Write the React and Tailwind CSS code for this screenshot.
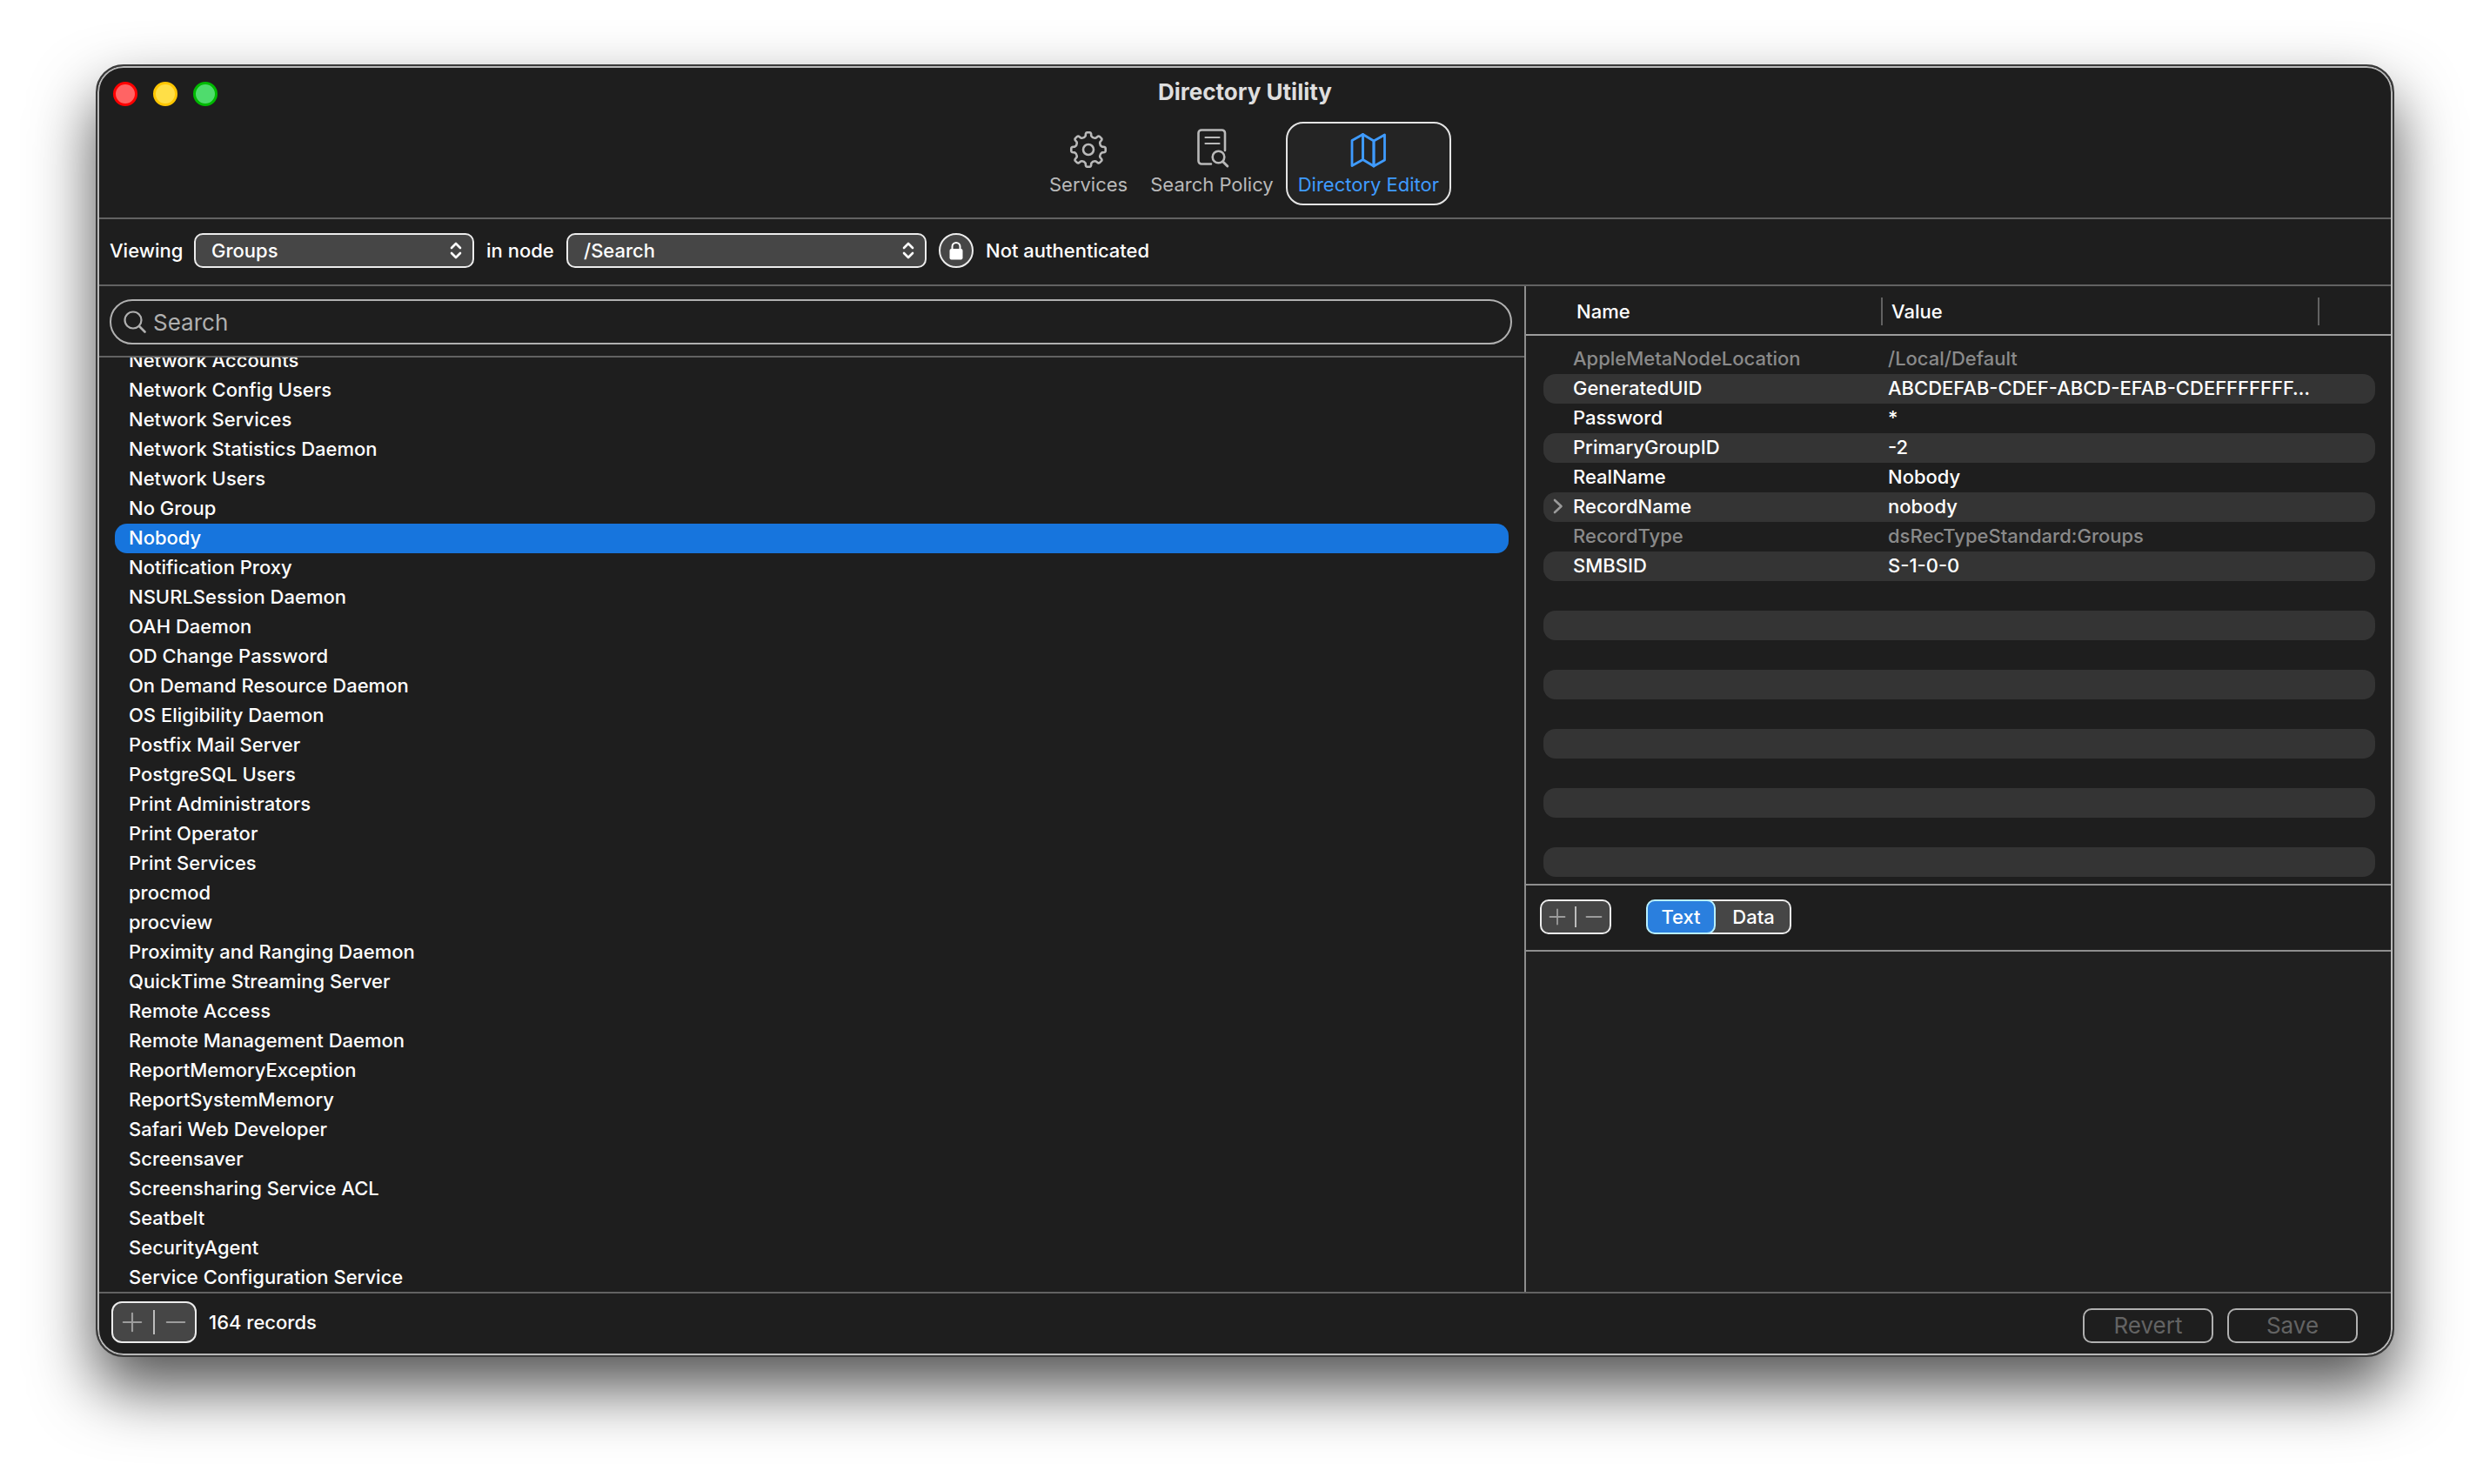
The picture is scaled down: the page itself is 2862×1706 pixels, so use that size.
import React from "react";

const records = [
  "Network Accounts", "Network Config Users", "Network Services", "Network Statistics Daemon",
  "Network Users", "No Group", "Nobody", "Notification Proxy", "NSURLSession Daemon",
  "OAH Daemon", "OD Change Password", "On Demand Resource Daemon", "OS Eligibility Daemon",
  "Postfix Mail Server", "PostgreSQL Users", "Print Administrators", "Print Operator",
  "Print Services", "procmod", "procview", "Proximity and Ranging Daemon",
  "QuickTime Streaming Server", "Remote Access", "Remote Management Daemon",
  "ReportMemoryException", "ReportSystemMemory", "Safari Web Developer", "Screensaver",
  "Screensharing Service ACL", "Seatbelt", "SecurityAgent", "Service Configuration Service",
];

const attributes = [
  { name: "AppleMetaNodeLocation", value: "/Local/Default", dim: true },
  { name: "GeneratedUID", value: "ABCDEFAB-CDEF-ABCD-EFAB-CDEFFFFFFF…" },
  { name: "Password", value: "*" },
  { name: "PrimaryGroupID", value: "-2" },
  { name: "RealName", value: "Nobody" },
  { name: "RecordName", value: "nobody", expandable: true },
  { name: "RecordType", value: "dsRecTypeStandard:Groups", dim: true },
  { name: "SMBSID", value: "S-1-0-0" },
  ...Array.from({ length: 10 }, () => ({ name: "", value: "" })),
];

function polar(angle, radius) {
  return `${(22 + radius * Math.cos(angle)).toFixed(2)} ${(22 + radius * Math.sin(angle)).toFixed(2)}`;
}

function gearPath() {
  const step = Math.PI / 4;
  let d = "";
  for (let i = 0; i < 8; i++) {
    const a = i * step - Math.PI / 2;
    d += `${i ? "L" : "M"}${polar(a - 0.21, 16)}L${polar(a - 0.16, 18.8)}Q${polar(a - 0.13, 19.8)} ${polar(a - 0.08, 19.8)}`;
    d += `L${polar(a + 0.08, 19.8)}Q${polar(a + 0.13, 19.8)} ${polar(a + 0.16, 18.8)}L${polar(a + 0.21, 16)}`;
    d += `Q${polar(a + step / 2, 13.6)} ${polar(a + step - 0.21, 16)}`;
  }
  return `${d}Z`;
}

function GearIcon() {
  return (
    <svg viewBox="0 0 44 44" className="size-11" fill="none" stroke="currentColor" strokeWidth="2.6" strokeLinejoin="round" aria-hidden="true">
      <path d={gearPath()} />
      <circle cx="22" cy="22" r="6" />
    </svg>
  );
}

function PolicyIcon() {
  return (
    <svg viewBox="0 0 44 48" className="h-12 w-11" fill="none" stroke="currentColor" strokeWidth="2.6" strokeLinecap="round" strokeLinejoin="round" aria-hidden="true">
      <path d="M21 40.500H10a3.500 3.500 0 0 1-3.500-3.500V5A3.500 3.500 0 0 1 10 1.500h23.500A3.500 3.500 0 0 1 37 5v20" />
      <path d="M14.500 10h16M14.500 17h16" strokeWidth="2.2" />
      <circle cx="29.500" cy="32.500" r="6.800" />
      <path d="M34.800 38l5 5" strokeWidth="3" />
    </svg>
  );
}

function MapIcon() {
  return (
    <svg viewBox="0 0 44 44" className="size-11" fill="none" stroke="currentColor" strokeWidth="2.8" strokeLinejoin="round" strokeLinecap="round" aria-hidden="true">
      <path d="M3 11.500L15.500 4.500v29L3 40.500z" />
      <path d="M15.500 4.500L28 12v29L15.500 33.500z" />
      <path d="M28 12L40.500 5v29L28 41z" />
    </svg>
  );
}

function PopUp({ label, value, width }) {
  return (
    <span className={`relative block ${width}`}>
      <select
        aria-label={label}
        defaultValue={value}
        className="block h-10 w-full appearance-none rounded-[10px] border-2 border-[#ececec] bg-[#464646] pl-[18px] pr-10 text-[22px] leading-7 font-medium text-white"
      >
        <option>{value}</option>
      </select>
      <svg viewBox="0 0 14 20" className="pointer-events-none absolute top-2.5 right-3.5 h-5 w-3.5" fill="none" stroke="white" strokeWidth="2.600" strokeLinecap="round" strokeLinejoin="round" aria-hidden="true">
        <path d="M2 7l5-5 5 5M2 13l5 5 5-5" />
      </svg>
    </span>
  );
}

function PlusMinus({ large, target }) {
  const icon = large ? "size-6" : "size-5";
  return (
    <div
      className={
        large
          ? "flex h-12 w-[98px] items-center justify-between rounded-xl border-2 border-[#ececec] bg-[#464646] px-[10px] text-[#9c9c9c]"
          : "flex h-10 w-[82px] items-center justify-between rounded-[10px] border-2 border-[#ececec] bg-[#464646] px-2 text-[#9c9c9c]"
      }
    >
      <button type="button" disabled aria-label={`Add ${target}`} className="block">
        <svg viewBox="0 0 20 20" className={icon} stroke="currentColor" strokeWidth="1.800" strokeLinecap="round" aria-hidden="true">
          <path d="M1.500 10h17M10 1.500v17" />
        </svg>
      </button>
      <span className={large ? "h-7 w-0.5 bg-[#bcbcbc]" : "h-6 w-0.5 bg-[#bcbcbc]"} />
      <button type="button" disabled aria-label={`Remove ${target}`} className="block">
        <svg viewBox="0 0 20 20" className={icon} stroke="currentColor" strokeWidth="1.800" strokeLinecap="round" aria-hidden="true">
          <path d="M1.500 10h17" />
        </svg>
      </button>
    </div>
  );
}

export default function App() {
  return (
    <div className="flex h-screen flex-col bg-white px-[110px] pt-[74px] pb-[146px] font-['Inter',sans-serif] text-[22px] leading-[34px] font-medium text-white">
      <main className="flex min-h-0 flex-1 flex-col overflow-hidden rounded-[32px] border-2 border-[#3a3a3a] bg-[#1e1e1e] shadow-[0_36px_72px_0_rgba(0,0,0,0.68)]">
        <div className="flex min-h-0 flex-1 flex-col overflow-hidden rounded-[30px] border-2 border-[#b9b9b9]">
          <header className="grid grid-cols-[1fr_auto_1fr] border-b-2 border-[#626262] pb-3.5">
            <div className="flex gap-[18px] pt-4 pl-4">
              <button type="button" aria-label="Close" className="size-7 rounded-full border-3 border-[#ff0000] bg-[#ff6464]" />
              <button type="button" aria-label="Minimize" className="size-7 rounded-full border-3 border-[#ffc600] bg-[#ffdf47]" />
              <button type="button" aria-label="Zoom" className="size-7 rounded-full border-3 border-[#00b900] bg-[#4fdc6d]" />
            </div>
            <div className="flex flex-col items-center">
              <h1 className="pt-3 text-[26px] leading-8 font-bold text-[#dedede]">Directory Utility</h1>
              <nav className="mt-4.5 flex h-24 leading-7 font-normal text-[#b9b9b9]">
                <button type="button" className="flex flex-col items-center gap-0.5 px-3 pt-2">
                  <span className="flex h-12 items-center"><GearIcon /></span>
                  <span>Services</span>
                </button>
                <button type="button" className="flex flex-col items-center gap-0.5 px-3.5 pt-2">
                  <span className="flex h-12 items-center"><PolicyIcon /></span>
                  <span>Search Policy</span>
                </button>
                <button type="button" aria-pressed="true" className="flex flex-col items-center gap-0.5 rounded-[20px] border-2 border-[#e4e4e4] bg-[#242424] px-3 pt-1.5 text-[#3f9bff]">
                  <span className="flex h-12 items-center"><MapIcon /></span>
                  <span>Directory Editor</span>
                </button>
              </nav>
            </div>
          </header>

          <section className="flex h-[77px] items-center border-b-2 border-[#626262] pb-[3px] pl-3">
            <span className="w-[97px]">Viewing</span>
            <PopUp label="Viewing" value="Groups" width="w-[322px]" />
            <span className="w-[106px] pl-3.5">in node</span>
            <PopUp label="in node" value="/Search" width="w-[414px]" />
            <button type="button" aria-label="Authenticate" className="ml-3.5 flex size-10 items-center justify-center rounded-full border-2 border-[#ececec] bg-[#464646]">
              <svg viewBox="0 0 16 22" className="h-[22px] w-4" aria-hidden="true">
                <path d="M3.500 10V6.500a4.500 4.500 0 0 1 9 0V10" fill="none" stroke="white" strokeWidth="2" />
                <rect x="0.500" y="9" width="15" height="12.500" rx="2" fill="white" />
              </svg>
            </button>
            <span className="ml-3.5">Not authenticated</span>
          </section>

          <div className="flex min-h-0 flex-1">
            <section className="flex min-w-0 flex-1 flex-col border-r-2 border-[#8e8e8e]">
              <div className="border-b-2 border-[#626262] pt-[15px] pr-3.5 pb-[13px] pl-3">
                <label className="flex h-[52px] items-center rounded-full border-2 border-[#b0b0b0] pl-3.5 text-[#b0b0b0]">
                  <svg viewBox="0 0 26 26" className="size-[26px] shrink-0" fill="none" stroke="currentColor" strokeWidth="2.200" strokeLinecap="round" aria-hidden="true">
                    <circle cx="11" cy="11" r="9.500" />
                    <path d="M18 18l6.500 6.500" strokeWidth="2.600" />
                  </svg>
                  <input type="search" aria-label="Search" placeholder="Search" className="ml-2 min-w-0 flex-1 bg-transparent pt-0.5 text-[26px] leading-8 font-normal outline-none placeholder:text-[#b0b0b0] placeholder:opacity-100" />
                </label>
              </div>
              <div className="min-h-0 flex-1 overflow-hidden">
                <ul className="-mt-[13px] pr-[18px] pl-[18px]">
                  {records.map((r) => (
                    <li key={r} className={r === "Nobody" ? "h-[34px] rounded-[14px] bg-[#1775dd] pl-4 leading-8" : "h-[34px] pl-4 leading-8"}>
                      {r}
                    </li>
                  ))}
                </ul>
              </div>
            </section>

            <section className="flex w-[994px] shrink-0 flex-col">
              <div className="flex-1 border-b-2 border-[#8e8e8e] pb-2">
                <table className="w-full table-fixed border-separate border-spacing-0 text-left">
                  <colgroup>
                    <col className="w-5" />
                    <col className="w-[390px]" />
                    <col className="w-[502px]" />
                    <col />
                    <col className="w-[18px]" />
                  </colgroup>
                  <thead>
                    <tr className="h-[57px]">
                      <th className="border-b-2 border-[#9d9d9d] p-0" />
                      <th scope="col" className="border-b-2 border-[#9d9d9d] p-0 pt-[3px] pl-[38px] font-medium">
                        <span className="flex h-8 items-center border-r-2 border-[#626262]">Name</span>
                      </th>
                      <th scope="col" className="border-b-2 border-[#9d9d9d] p-0 pt-[3px] font-medium">
                        <span className="flex h-8 items-center border-r-2 border-[#626262] pl-2.5">Value</span>
                      </th>
                      <th className="border-b-2 border-[#9d9d9d] p-0" />
                      <th className="border-b-2 border-[#9d9d9d] p-0" />
                    </tr>
                  </thead>
                  <tbody>
                    <tr className="h-2.5"><td colSpan="5" className="p-0" /></tr>
                    {attributes.map((a, i) => (
                      <tr key={i} className={a.dim ? "h-[34px] text-[#8a8a8a]" : "h-[34px]"}>
                        <td className="p-0" />
                        <td className={i % 2 ? "rounded-l-[14px] bg-[#343434] p-0 align-top" : "p-0 align-top"}>
                          <span className="flex h-8 items-center leading-8">
                            <span className="flex w-[34px] justify-center text-[#9a9a9a]">
                              {a.expandable && (
                                <svg viewBox="0 0 12 18" className="h-[18px] w-3" fill="none" stroke="currentColor" strokeWidth="2.600" strokeLinecap="round" strokeLinejoin="round" aria-hidden="true">
                                  <path d="M2 2l7.500 7L2 16" />
                                </svg>
                              )}
                            </span>
                            {a.name}
                          </span>
                        </td>
                        <td className={i % 2 ? "truncate bg-[#343434] p-0 pl-1.5 align-top leading-8" : "truncate p-0 pl-1.5 align-top leading-8"}>{a.value}</td>
                        <td className={i % 2 ? "rounded-r-[14px] bg-[#343434] p-0" : "p-0"} />
                        <td className="p-0" />
                      </tr>
                    ))}
                  </tbody>
                </table>
              </div>
              <div className="flex h-[76px] shrink-0 items-center border-b-2 border-[#8e8e8e] pb-0.5 pl-4">
                <PlusMinus target="attribute" />
                <div className="ml-10 flex h-10 rounded-[10px] bg-[#464646]">
                  <button type="button" aria-pressed="true" className="z-10 w-20 rounded-[10px] border-2 border-[#b8f0ff] bg-[#2a7fde] leading-8">Text</button>
                  <button type="button" aria-pressed="false" className="-ml-2.5 w-[97px] rounded-r-[10px] border-2 border-l-0 border-[#ececec] pl-3 leading-8">Data</button>
                </div>
              </div>
              <textarea aria-label="Attribute value" className="block h-[391px] w-full shrink-0 resize-none bg-[#202020] outline-none" />
            </section>
          </div>

          <footer className="flex h-[71px] shrink-0 items-start border-t-2 border-[#626262] pt-[9px] pr-[38px] pl-3.5">
            <PlusMinus large target="record" />
            <span className="ml-3.5 pt-[7px]">164 records</span>
            <div className="ml-auto flex gap-4 pt-2 text-[26px] font-normal text-[#636363]">
              <button type="button" disabled className="h-10 w-[150px] rounded-[10px] border-2 border-[#b0b0b0] leading-9">Revert</button>
              <button type="button" disabled className="h-10 w-[150px] rounded-[10px] border-2 border-[#b0b0b0] leading-9">Save</button>
            </div>
          </footer>
        </div>
      </main>
    </div>
  );
}
